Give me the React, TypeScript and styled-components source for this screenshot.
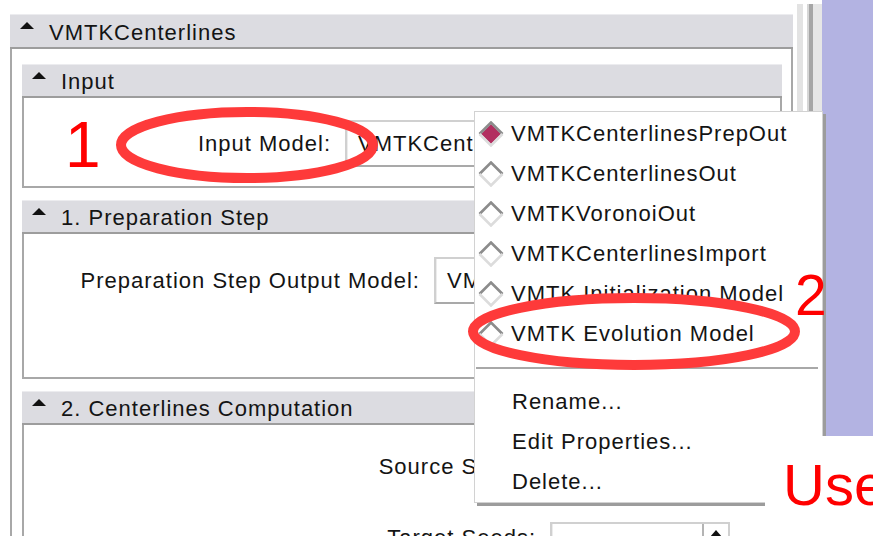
import * as React from 'react';
import styled, { createGlobalStyle } from 'styled-components';

const GlobalStyle = createGlobalStyle`
  html, body {
    margin: 0;
    padding: 0;
    background: #ffffff;
  }
  body {
    font-family: "Liberation Sans", Arial, sans-serif;
  }
`;

const Page = styled.div`
  position: relative;
  width: 873px;
  height: 536px;
  overflow: hidden;
  display: flex;
  background: #ffffff;
  font-family: "Liberation Sans", Arial, sans-serif;
  font-size: 22px;
  letter-spacing: 1px;
  color: #141414;
`;

const Workspace = styled.div`
  width: 793px;
  flex: none;
  box-sizing: border-box;
  padding: 14px 0 0 10px;
  display: flex;
  flex-direction: column;
`;

const Panel = styled.section<{ $grow?: boolean }>`
  display: flex;
  flex-direction: column;
  flex: ${p => (p.$grow ? '1' : 'none')};
`;

const PanelHeader = styled.div<{ $h: number }>`
  height: ${p => p.$h}px;
  box-sizing: border-box;
  flex: none;
  background: #dcdce1;
  border-top: 1px solid #ececef;
  border-bottom: 2px solid #9d9d9d;
  display: flex;
  align-items: center;
  padding: 3px 0 0 10px;
`;

const Toggle = styled.span`
  align-self: flex-start;
  margin-top: 4px;
  margin-right: 15px;
  width: 0;
  height: 0;
  border-left: 7px solid transparent;
  border-right: 7px solid transparent;
  border-bottom: 7px solid #111111;
`;

const Title = styled.span`
  white-space: nowrap;
`;

const OuterBody = styled.div`
  flex: 1;
  border-left: 2px solid #a8a8a8;
  border-right: 2px solid #a8a8a8;
  padding: 15px 9px 0 10px;
  display: flex;
  flex-direction: column;
  gap: 12px;
`;

const PanelBody = styled.div<{ $h?: number; $pt: number }>`
  box-sizing: border-box;
  ${p => (p.$h ? `height: ${p.$h}px;` : 'flex: 1;')}
  border: 2px solid #a8a8a8;
  border-top: none;
  padding-top: ${p => p.$pt}px;
  background: #ffffff;
`;

const FieldGrid = styled.div<{ $labelW: number; $rowGap?: number }>`
  display: grid;
  grid-template-columns: ${p => p.$labelW}px auto;
  column-gap: 14px;
  row-gap: ${p => p.$rowGap ?? 0}px;
  align-items: center;
`;

const FieldLabel = styled.label`
  text-align: right;
  white-space: nowrap;
`;

const Combo = styled.div<{ $w: number; $h?: number }>`
  width: ${p => p.$w}px;
  height: ${p => p.$h ?? 47}px;
  box-sizing: border-box;
  border: 2px solid #d0d0d0;
  border-bottom-color: #a9a9a9;
  display: flex;
  background: #ffffff;
`;

const ComboText = styled.span`
  flex: 1;
  padding-left: 10px;
  display: flex;
  align-items: center;
  overflow: hidden;
  white-space: nowrap;
  border-left: 1px solid #ececec;
`;

const ComboButton = styled.span`
  width: 26px;
  flex: none;
  border-left: 2px solid #b4b4b4;
  display: flex;
  justify-content: center;
  padding-top: 6px;
  box-sizing: border-box;
  &::before {
    content: '';
    width: 0;
    height: 0;
    border-left: 6px solid transparent;
    border-right: 6px solid transparent;
    border-bottom: 7px solid #111111;
  }
`;

const Splitter = styled.div`
  width: 29px;
  flex: none;
  box-sizing: border-box;
  padding-top: 4px;
  display: flex;
`;

const Stripe = styled.div<{ $w: number; $c: string }>`
  width: ${p => p.$w}px;
  flex: none;
  background: ${p => p.$c};
`;

const Viewer = styled.div`
  flex: 1;
  display: flex;
  flex-direction: column;
`;

const RenderView = styled.div`
  height: 436px;
  background: #b3b3e2;
`;

const PopupMenu = styled.div`
  position: absolute;
  left: 474px;
  top: 111px;
  width: 349px;
  box-sizing: border-box;
  background: #ffffff;
  border: 1px solid #d2d2d2;
  box-shadow: 3px 3px 0 #9c9c9c;
  padding: 2px 0 0;
  display: flex;
  flex-direction: column;
`;

const MenuItem = styled.div<{ $plain?: boolean }>`
  height: 40px;
  display: flex;
  align-items: center;
  gap: 7px;
  padding-left: ${p => (p.$plain ? 37 : 3)}px;
  white-space: nowrap;
`;

const MenuSeparator = styled.div`
  height: 28px;
  display: flex;
  align-items: center;
  &::before {
    content: '';
    flex: 1;
    margin: 0 4px 0 1px;
    border-top: 2px solid #a8a8a8;
  }
`;

const Ring = styled.svg<{ $x: number; $y: number }>`
  position: absolute;
  left: ${p => p.$x}px;
  top: ${p => p.$y}px;
  overflow: visible;
  pointer-events: none;
`;

const Callout = styled.span<{ $x: number; $y: number; $size: number }>`
  position: absolute;
  left: ${p => p.$x}px;
  top: ${p => p.$y}px;
  font-size: ${p => p.$size}px;
  line-height: ${p => p.$size}px;
  letter-spacing: 0;
  color: #ff0000;
`;

const SlideCard = styled.div`
  position: absolute;
  left: 765px;
  top: 436px;
  width: 108px;
  height: 100px;
  background: #ffffff;
  box-sizing: border-box;
  padding: 20px 0 0 18px;
  font-size: 58px;
  line-height: 58px;
  letter-spacing: 0;
  color: #ff0000;
  white-space: nowrap;
`;

const RadioDiamond = ({ selected }: { selected?: boolean }) => (
  <svg width="26" height="26" viewBox="0 0 26 26">
    {selected && <polygon points="13,3 23,13 13,23 3,13" fill="#b22f60" />}
    <polyline points="1.5,13 13,1.5 24.5,13" fill="none" stroke="#8c8c8c" strokeWidth="2.6" />
    <polyline points="24.5,13 13,24.5 1.5,13" fill="none" stroke="#dcdcdc" strokeWidth="2.6" />
  </svg>
);

const RedRing = ({ x, y, w, h }: { x: number; y: number; w: number; h: number }) => (
  <Ring $x={x} $y={y} width={w} height={h} viewBox={`0 0 ${w} ${h}`}>
    <ellipse cx={w / 2} cy={h / 2} rx={w / 2 - 5} ry={h / 2 - 5} fill="none" stroke="#fe3a3a" strokeWidth="10" />
  </Ring>
);

const models = [
  'VMTKCenterlinesPrepOut',
  'VMTKCenterlinesOut',
  'VMTKVoronoiOut',
  'VMTKCenterlinesImport',
  'VMTK Initialization Model',
  'VMTK Evolution Model',
];

const actions = ['Rename...', 'Edit Properties...', 'Delete...'];

const stripes = [
  { w: 4, c: '#ffffff' },
  { w: 6, c: '#e3e3e3' },
  { w: 4, c: '#ffffff' },
  { w: 2, c: '#d6d6d6' },
  { w: 4, c: '#a6a6a6' },
  { w: 9, c: '#e6e6e6' },
];

export default function App() {
  return (
    <Page>
      <GlobalStyle />
      <Workspace>
        <Panel $grow>
          <PanelHeader $h={35}>
            <Toggle />
            <Title>VMTKCenterlines</Title>
          </PanelHeader>
          <OuterBody>
            <Panel>
              <PanelHeader $h={34}>
                <Toggle />
                <Title>Input</Title>
              </PanelHeader>
              <PanelBody $h={90} $pt={22}>
                <FieldGrid $labelW={307}>
                  <FieldLabel>Input Model:</FieldLabel>
                  <Combo $w={380}>
                    <ComboText>VMTKCenterlinesPrepOut</ComboText>
                  </Combo>
                </FieldGrid>
              </PanelBody>
            </Panel>
            <Panel>
              <PanelHeader $h={34}>
                <Toggle />
                <Title>1. Preparation Step</Title>
              </PanelHeader>
              <PanelBody $h={145} $pt={23}>
                <FieldGrid $labelW={396}>
                  <FieldLabel>Preparation Step Output Model:</FieldLabel>
                  <Combo $w={300}>
                    <ComboText>VMTKCenterlinesPrepOut</ComboText>
                  </Combo>
                </FieldGrid>
              </PanelBody>
            </Panel>
            <Panel $grow>
              <PanelHeader $h={34}>
                <Toggle />
                <Title>2. Centerlines Computation</Title>
              </PanelHeader>
              <PanelBody $pt={26}>
                <FieldGrid $labelW={512} $rowGap={39}>
                  <FieldLabel>Source Seeds:</FieldLabel>
                  <Combo $w={180} $h={32}>
                    <ComboText />
                    <ComboButton />
                  </Combo>
                  <FieldLabel>Target Seeds:</FieldLabel>
                  <Combo $w={180} $h={32}>
                    <ComboText />
                    <ComboButton />
                  </Combo>
                </FieldGrid>
              </PanelBody>
            </Panel>
          </OuterBody>
        </Panel>
      </Workspace>
      <Splitter>
        {stripes.map((s, i) => (
          <Stripe key={i} $w={s.w} $c={s.c} />
        ))}
      </Splitter>
      <Viewer>
        <RenderView />
      </Viewer>

      <PopupMenu>
        {models.map((m, i) => (
          <MenuItem key={m}>
            <RadioDiamond selected={i === 0} />
            <span>{m}</span>
          </MenuItem>
        ))}
        <MenuSeparator />
        {actions.map(a => (
          <MenuItem key={a} $plain>
            {a}
          </MenuItem>
        ))}
      </PopupMenu>

      <RedRing x={116} y={107} w={262} h={76} />
      <RedRing x={468} y={293} w={332} h={77} />
      <Callout $x={65} $y={113} $size={64}>1</Callout>
      <Callout $x={795} $y={267} $size={57}>2</Callout>
      <SlideCard>Use</SlideCard>
    </Page>
  );
}
